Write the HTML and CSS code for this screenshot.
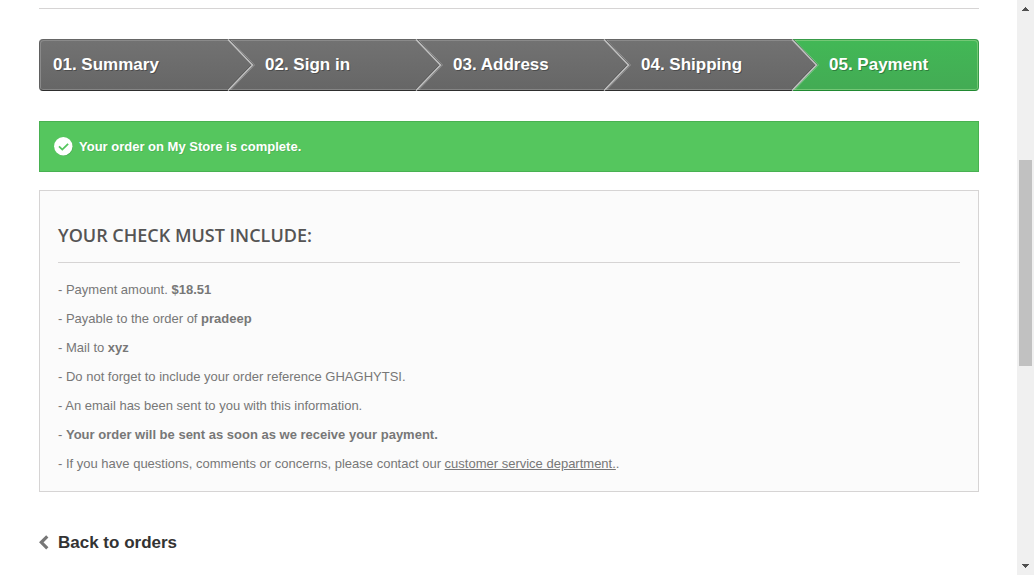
FILE: index.html
```html
<!DOCTYPE html>
<html lang="en">
<head>
<meta charset="utf-8">
<meta name="viewport" content="width=device-width, initial-scale=1">
<title>Order confirmation - My Store</title>
<link rel="stylesheet" href="styles.css">
</head>
<body class="page">
<main class="content">
  <hr class="divider">
  <ol class="steps">
    <li class="step"><span>01. Summary</span>
      <svg class="step-arrow" viewBox="0 0 28 52" aria-hidden="true"><use href="#arrow"/></svg></li>
    <li class="step"><span>02. Sign in</span>
      <svg class="step-arrow" viewBox="0 0 28 52" aria-hidden="true"><use href="#arrow"/></svg></li>
    <li class="step"><span>03. Address</span>
      <svg class="step-arrow" viewBox="0 0 28 52" aria-hidden="true"><use href="#arrow"/></svg></li>
    <li class="step"><span>04. Shipping</span>
      <svg class="step-arrow" viewBox="0 0 28 52" aria-hidden="true"><use href="#arrow"/></svg></li>
    <li class="step step-current" aria-current="step"><span>05. Payment</span></li>
  </ol>
  <p class="alert" role="status">
    <svg class="alert-icon" viewBox="0 0 19 19" aria-hidden="true">
      <circle cx="10" cy="10" r="9" fill="#49aa50"/>
      <circle cx="9.3" cy="9.3" r="9.2" fill="#fff"/>
      <path d="M5 9.3l3.3 3.3 5.8-5.8" fill="none" stroke="#55c65e" stroke-width="1.8"/>
    </svg>
    <span>Your order on My Store is complete.</span>
  </p>
  <section class="box">
    <h1 class="box-title">Your check must include:</h1>
    <p class="line">- Payment amount. <strong>$18.51</strong></p>
    <p class="line">- Payable to the order of <strong>pradeep</strong></p>
    <p class="line">- Mail to <strong>xyz</strong></p>
    <p class="line">- Do not forget to include your order reference GHAGHYTSI.</p>
    <p class="line">- An email has been sent to you with this information.</p>
    <p class="line">- <strong>Your order will be sent as soon as we receive your payment.</strong></p>
    <p class="line">- If you have questions, comments or concerns, please contact our <a class="link" href="#contact">customer service department.</a>.</p>
  </section>
  <a class="back" href="#orders">
    <svg class="back-icon" viewBox="0 0 10 16" aria-hidden="true"><path d="M8.3 1.3L2.3 7.3l6 6" fill="none" stroke="#777" stroke-width="3.2"/></svg>
    <span>Back to orders</span>
  </a>
</main>
<div class="scrollbar" aria-hidden="true">
  <svg class="scroll-arrow" viewBox="0 0 17 17" shape-rendering="crispEdges"><path d="M5 11h7v-1h-1V9h-1V8H9V7H8v1H7v1H6v1H5z" fill="#505050"/></svg>
  <div class="scroll-thumb"></div>
  <svg class="scroll-arrow scroll-down" viewBox="0 0 17 17" shape-rendering="crispEdges"><path d="M5 6h7v1h-1v1h-1v1H9v1H8v-1H7V8H6V7H5z" fill="#505050"/></svg>
</div>
<svg width="0" height="0" class="defs" aria-hidden="true">
  <defs>
    <linearGradient id="gray" x1="0" y1="0" x2="0" y2="1">
      <stop offset="0" stop-color="#727272"/><stop offset="1" stop-color="#666"/>
    </linearGradient>
    <symbol id="arrow" viewBox="0 0 28 52">
      <path d="M0 0h1l25 26L1 52H0z" fill="url(#gray)"/>
      <path d="M0 .5h1" stroke="#666"/>
      <path d="M0 1.5h2" stroke="#8a8a8a"/>
      <path d="M0 50.5h1" stroke="#858585"/>
      <path d="M0 51.5h1" stroke="#2e2e2e"/>
      <path d="M3.5 1L27.5 26 3.5 51" fill="none" stroke="#fff" stroke-opacity=".28"/>
      <path d="M2.5 .5L26.5 26" fill="none" stroke="#454545" stroke-opacity=".65"/>
      <path d="M.5 50.5L24 26" fill="none" stroke="#444" stroke-opacity=".6"/>
      <path d="M1 .5L25.5 26 1 51.5" fill="none" stroke="#c2c2c2" stroke-width="1.5"/>
    </symbol>
  </defs>
</svg>
</body>
</html>
```
FILE: styles.css
```css
* { box-sizing: border-box; }

.page {
  margin: 0;
  display: flex;
  min-height: 100vh;
  background: #fff;
  color: #777;
  font: 13px/18px "Liberation Sans", Arial, sans-serif;
}

.content {
  flex: 1;
  min-width: 0;
  padding: 8px 38px 20px 39px;
}

.divider {
  margin: 0 0 30px;
  border: 0;
  border-top: 1px solid #d6d4d4;
}

.steps {
  display: grid;
  grid-template-columns: repeat(5, 1fr);
  margin: 0 0 30px;
  padding: 0;
  list-style: none;
  color: #fff;
  font-size: 17px;
  font-weight: 700;
  line-height: 22px;
  text-shadow: 1px 1px rgba(0, 0, 0, .3);
}

.step {
  position: relative;
  padding: 14px 0 14px 38px;
  background: linear-gradient(#727272, #666);
  border-top: 1px solid #666;
  border-bottom: 1px solid #2e2e2e;
  box-shadow: inset 0 1px #8a8a8a, inset 0 -1px #858585;
}

.step:first-child {
  padding-left: 13px;
  border-left: 1px solid #606060;
  border-radius: 4px 0 0 4px;
  box-shadow: inset 1px 1px #8a8a8a, inset 0 -1px #858585;
}

.step-current {
  background: linear-gradient(#42b856, #43ab54);
  border: 1px solid #399b49;
  border-left: 0;
  border-bottom-color: #208931;
  border-radius: 0 4px 4px 0;
  box-shadow: inset -1px 1px #74c776, inset 0 -1px #74c776;
}

.step-arrow {
  position: absolute;
  z-index: 1;
  top: -1px;
  left: 100%;
  width: 28px;
  height: 52px;
}

.alert {
  display: flex;
  align-items: center;
  gap: 6px;
  margin: 0 0 18px;
  padding: 15px 14px;
  background: #55c65e;
  border: 1px solid #48b151;
  color: #fff;
  font-weight: 700;
  text-shadow: 1px 1px rgba(0, 0, 0, .1);
}

.alert-icon {
  width: 19px;
  height: 19px;
}

.box {
  padding: 32px 18px 18px;
  background: #fbfbfb;
  border: 1px solid #d6d4d4;
}

.box-title {
  margin: 0 0 18px;
  padding-bottom: 15px;
  border-bottom: 1px solid #d6d4d4;
  color: #555454;
  font: 600 18px/24px "Open Sans", sans-serif;
  text-transform: uppercase;
}

.line { margin: 0 0 11px; }
.line:last-child { margin-bottom: 0; }
.link { color: #777; }

.back {
  display: inline-flex;
  align-items: center;
  gap: 9px;
  margin-top: 40px;
  color: #333;
  font-size: 17px;
  font-weight: 700;
  line-height: 22px;
  text-decoration: none;
}

.back-icon {
  width: 10px;
  height: 16px;
}

.scrollbar {
  position: sticky;
  top: 0;
  display: grid;
  grid-template-rows: 17px 143fr 206fr 192fr 17px;
  width: 17px;
  height: 100vh;
  background: #f0f0f0;
}

.scroll-arrow {
  width: 17px;
  height: 17px;
}

.scroll-down { grid-row: 5; }

.scroll-thumb {
  grid-row: 3;
  margin: 0 2px;
  background: #c1c1c1;
}

.defs { position: absolute; }
```
